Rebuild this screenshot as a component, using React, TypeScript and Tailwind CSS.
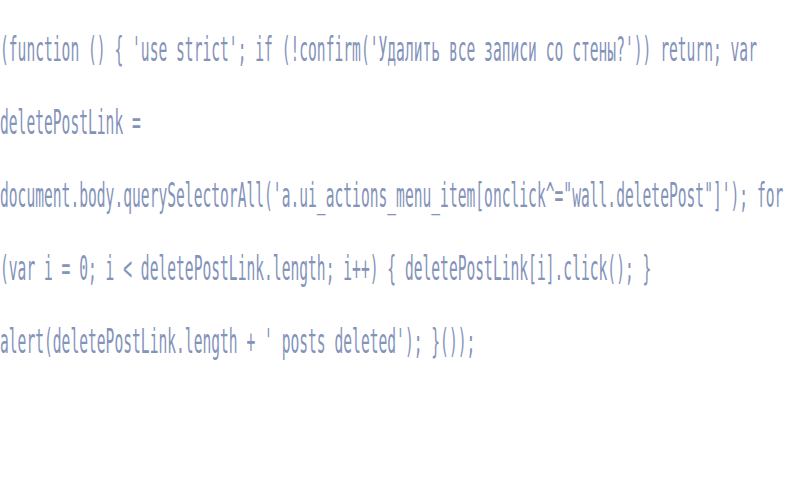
import React from "react";

const lines = [
  "(function () { 'use strict'; if (!confirm('Удалить все записи со стены?')) return; var",
  "deletePostLink =",
  "document.body.querySelectorAll('a.ui_actions_menu_item[onclick^=\"wall.deletePost\"]'); for",
  "(var i = 0; i < deletePostLink.length; i++) { deletePostLink[i].click(); }",
  "alert(deletePostLink.length + ' posts deleted'); }());",
];

export default function App() {
  return (
    <div className="w-[804px] h-[500px] bg-white overflow-hidden pt-[13px]">
      <div
        className="text-[34px] leading-[73px] text-[#8493ba] whitespace-pre origin-left scale-x-[0.43] w-[1870px]"
        style={{ fontFamily: '"DejaVu Sans Mono", monospace', transformOrigin: "0 0" }}
      >
        {lines.map((l, i) => (
          <div key={i}>{l}</div>
        ))}
      </div>
    </div>
  );
}
